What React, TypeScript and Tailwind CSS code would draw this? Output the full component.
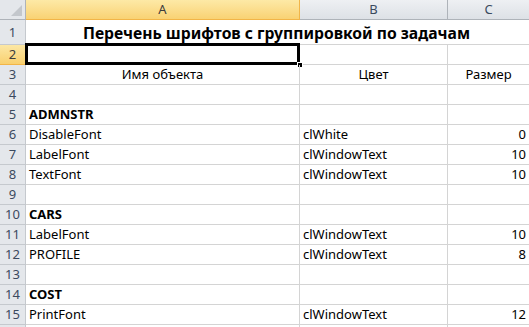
import React from "react";

type Row = {
  n: number;
  a?: string;
  b?: string;
  c?: string;
  bold?: boolean;
  center?: boolean;
};

const rows: Row[] = [
  { n: 2 },
  { n: 3, a: "Имя объекта", b: "Цвет", c: "Размер", center: true },
  { n: 4 },
  { n: 5, a: "ADMNSTR", bold: true },
  { n: 6, a: "DisableFont", b: "clWhite", c: "0" },
  { n: 7, a: "LabelFont", b: "clWindowText", c: "10" },
  { n: 8, a: "TextFont", b: "clWindowText", c: "10" },
  { n: 9 },
  { n: 10, a: "CARS", bold: true },
  { n: 11, a: "LabelFont", b: "clWindowText", c: "10" },
  { n: 12, a: "PROFILE", b: "clWindowText", c: "8" },
  { n: 13 },
  { n: 14, a: "COST", bold: true },
  { n: 15, a: "PrintFont", b: "clWindowText", c: "12" },
  { n: 16 },
];

const font = { fontFamily: '"Noto Sans", "Liberation Sans", sans-serif' };

function RowHead({ n, active, tall }: { n: number; active?: boolean; tall?: boolean }) {
  return (
    <div
      className={`w-[26px] shrink-0 flex items-center justify-center text-[13px] border-r border-b ${
        tall ? "h-[25px] pt-[2px]" : "h-[20px]"
      } ${
        active
          ? "bg-gradient-to-b from-[#fce7a4] to-[#f9d06e] border-[#f2b548] text-[#3c3c3c]"
          : "bg-[#e4e7eb] border-[#c5c9ce] text-[#3b4a5e]"
      }`}
    >
      {n < 16 ? n : ""}
    </div>
  );
}

export default function App() {
  return (
    <div className="w-[529px] h-[327px] overflow-hidden bg-white text-black" style={font}>
      {/* column headers */}
      <div className="flex h-[20px]">
        <div className="w-[26px] shrink-0 relative bg-[#e4e7eb] border-r border-b border-[#aeb3b9]">
          <svg className="absolute right-[3px] bottom-[3px]" width="11" height="11" viewBox="0 0 11 11">
            <polygon points="11,0 11,11 0,11" fill="#c3c7cc" />
          </svg>
        </div>
        <div className="w-[274px] shrink-0 flex items-center justify-center text-[13px] text-[#3c3c3c] bg-gradient-to-b from-[#fde9a6] to-[#f9d273] border-r border-b border-[#f2b548]">
          A
        </div>
        <div className="w-[148px] shrink-0 flex items-center justify-center text-[13px] text-[#3b4a5e] bg-gradient-to-b from-[#eef0f3] to-[#dde1e6] border-r border-b border-[#aeb3b9]">
          B
        </div>
        <div className="flex-1 flex items-center justify-center text-[13px] text-[#3b4a5e] bg-gradient-to-b from-[#eef0f3] to-[#dde1e6] border-b border-[#aeb3b9]">
          C
        </div>
      </div>

      {/* row 1: merged title */}
      <div className="flex">
        <RowHead n={1} tall />
        <div className="flex-1 h-[25px] flex items-center justify-center pt-[3px] border-b border-[#d4d4d4] text-[15.7px] font-bold pr-[2px]">
          Перечень шрифтов с группировкой по задачам
        </div>
      </div>

      {rows.map((r) => (
        <div key={r.n} className="flex">
          <RowHead n={r.n} active={r.n === 2} />
          <div
            className={`w-[274px] shrink-0 h-[20px] relative flex items-center px-[3px] text-[13px] border-r border-b border-[#d4d4d4] ${
              r.bold ? "font-bold" : ""
            } ${r.center ? "justify-center" : ""}`}
          >
            {r.a}
            {r.n === 2 && (
              <>
                <div className="absolute -left-px -top-[2px] -right-px -bottom-[1px] border-[3px] border-black" />
                <div className="absolute -right-[4px] -bottom-[4px] w-[6px] h-[6px] bg-black border border-white" />
              </>
            )}
          </div>
          <div
            className={`w-[148px] shrink-0 h-[20px] flex items-center px-[3px] text-[13px] border-r border-b border-[#d4d4d4] ${
              r.center ? "justify-center" : ""
            }`}
          >
            {r.b}
          </div>
          <div
            className={`flex-1 h-[20px] flex items-center px-[3px] text-[13px] border-b border-[#d4d4d4] ${
              r.center ? "justify-center" : "justify-end"
            }`}
          >
            {r.c}
          </div>
        </div>
      ))}
    </div>
  );
}
